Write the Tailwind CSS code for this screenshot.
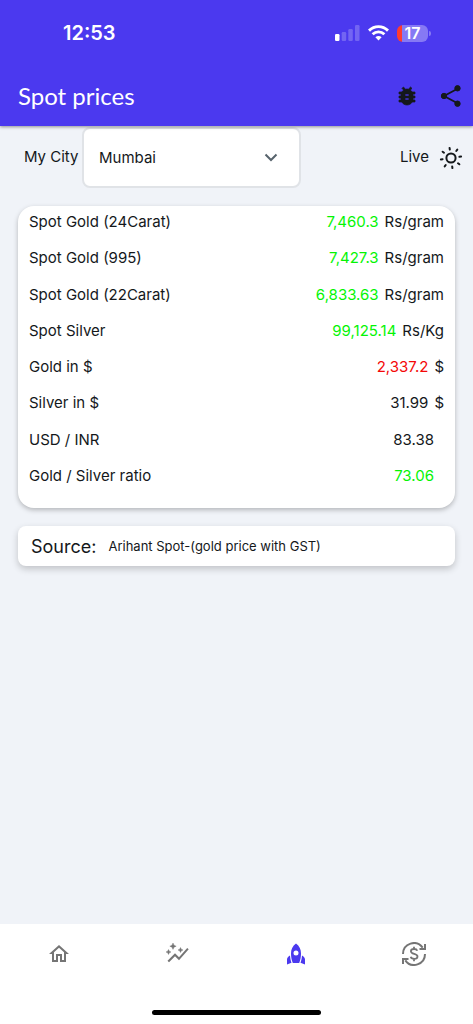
<!DOCTYPE html>
<html lang="en">
<head>
<meta charset="utf-8">
<meta name="viewport" content="width=device-width, initial-scale=1">
<title>Spot prices</title>
<script src="https://cdn.jsdelivr.net/npm/@tailwindcss/browser@4"></script>
</head>
<body class="flex min-h-screen flex-col bg-[#f0f3f8] font-['Inter',sans-serif] text-[15px] text-[#14181b]">
<header class="relative z-10 bg-[#4b39ef] pb-[6px] shadow-[0_1px_3px_rgba(0,0,0,0.4)]">
  <div class="flex h-[66px] items-center justify-between pr-[42px] pl-[63px] text-white">
    <time class="text-xl font-semibold">12:53</time>
    <div class="flex items-center gap-2">
      <svg class="h-4 w-[25px]" viewBox="0 0 25 16" fill="#fff" aria-label="Signal"><rect y="9" width="4.500" height="7" rx="1.2"/><g opacity=".22"><rect x="6.7" y="7" width="4.5" height="9" rx="1.2"/><rect x="13.3" y="4" width="4.5" height="12" rx="1.2"/><rect x="20" width="4.5" height="16" rx="1.2"/></g></svg>
      <svg class="h-4 w-[21px]" viewBox="0 0 21 16" fill="none" stroke="#fff" stroke-width="2.9" aria-label="Wi-Fi"><path d="M1 5.600C6.500.3 14.500.3 20 5.600M4.600 9.300C8 6.100 13 6.100 16.400 9.300"/><path d="M7.400 12.200c1.900-1.700 4.300-1.700 6.200 0l-3.100 3.300z" fill="#fff" stroke="none"/></svg>
      <div class="flex items-center gap-px">
        <div class="flex h-[17px] w-[31px] items-center justify-center rounded-md bg-linear-to-r from-[#ff3b30] from-[17%] to-[#8679f4] to-[17%] text-base font-semibold">17</div>
        <div class="h-[5px] w-[2px] rounded-r-full bg-[#8679f4]"></div>
      </div>
    </div>
  </div>
  <div class="flex h-[54px] items-center justify-between pt-[6px] pr-[10px] pl-[18px]">
    <h1 class="font-['Lato',sans-serif] text-2xl text-white">Spot prices</h1>
    <div class="flex items-center gap-5">
      <button aria-label="Report a bug" class="block"><svg class="size-6" viewBox="0 0 24 24" fill="#14181b" stroke="#14181b" stroke-width=".7"><path d="M20 8h-2.810c-.45-.78-1.070-1.450-1.820-1.960L17 4.410 15.590 3l-2.170 2.170C12.960 5.060 12.490 5 12 5s-.96.060-1.410.170L8.410 3 7 4.410l1.620 1.630C7.880 6.550 7.260 7.220 6.810 8H4v2h2.090c-.05.330-.09.660-.09 1v1H4v2h2v1c0 .34.040.67.090 1H4v2h2.810c1.040 1.790 2.970 3 5.190 3s4.150-1.210 5.190-3H20v-2h-2.090c.05-.33.090-.66.090-1v-1h2v-2h-2v-1c0-.34-.04-.67-.09-1H20V8zm-6 8h-4v-2h4v2zm0-4h-4v-2h4v2z"/></svg></button>
      <button aria-label="Share" class="block"><svg class="size-6" viewBox="0 0 24 24" fill="#14181b" stroke="#14181b"><path d="M19 4.500 5 12l14 7.500" fill="none" stroke-width="1.800"/><circle cx="18.500" cy="4.300" r="2.700"/><circle cx="5" cy="12" r="2.700"/><circle cx="18.500" cy="19.700" r="2.700"/></svg></button>
    </div>
  </div>
</header>
<main class="flex grow flex-col">
  <div class="flex items-center pt-px pr-[10px] pl-6">
    <label for="city" class="w-[58px] whitespace-nowrap">My City</label>
    <div class="relative w-[219px]">
      <select id="city" class="h-[61px] w-full appearance-none rounded-lg border-2 border-[#e0e3e7] bg-white px-[15px] pt-px"><option>Mumbai</option></select>
      <svg class="pointer-events-none absolute top-[18px] right-[18px] size-6" viewBox="0 0 24 24" fill="none" stroke="#57636c" stroke-width="2"><path d="m6.500 9.500 5.500 5.500 5.500-5.500"/></svg>
    </div>
    <div class="ml-auto flex items-center gap-[10px]">
      <span>Live</span>
      <svg class="size-6" viewBox="0 0 24 24" fill="none" stroke="#14181b" stroke-width="2" aria-hidden="true"><circle cx="12" cy="12" r="4.600"/><g transform="rotate(-8 12 12)" stroke-linecap="round"><path d="M12 1.800v1.700M12 20.500v1.700M1.800 12h1.700M20.500 12h1.700M4.600 4.600l1.200 1.200M18.200 18.200l1.200 1.200M4.600 19.400l1.200-1.200M18.200 5.800l1.200-1.200"/></g></svg>
    </div>
  </div>
  <section class="mx-[18px] mt-[18px] rounded-2xl bg-white px-[11px] pb-3 shadow-[0_2px_5px_rgba(0,0,0,0.25)]">
    <table class="h-[290px] w-full leading-8">
      <tbody class="align-top">
        <tr><th scope="row" class="text-left font-normal">Spot Gold (24Carat)</th><td class="text-right"><span class="mr-[6px] text-[#04f404]">7,460.3</span>Rs/gram</td></tr>
        <tr><th scope="row" class="text-left font-normal">Spot Gold (995)</th><td class="text-right"><span class="mr-[6px] text-[#04f404]">7,427.3</span>Rs/gram</td></tr>
        <tr><th scope="row" class="text-left font-normal">Spot Gold (22Carat)</th><td class="text-right"><span class="mr-[6px] text-[#04f404]">6,833.63</span>Rs/gram</td></tr>
        <tr><th scope="row" class="text-left font-normal">Spot Silver</th><td class="text-right"><span class="mr-[6px] text-[#04f404]">99,125.14</span>Rs/Kg</td></tr>
        <tr><th scope="row" class="text-left font-normal">Gold in $</th><td class="text-right"><span class="mr-[6px] text-[#f40808]">2,337.2</span>$</td></tr>
        <tr><th scope="row" class="text-left font-normal">Silver in $</th><td class="text-right"><span class="mr-[6px]">31.99</span>$</td></tr>
        <tr><th scope="row" class="text-left font-normal">USD / INR</th><td class="pr-[10px] text-right">83.38</td></tr>
        <tr><th scope="row" class="text-left font-normal">Gold / Silver ratio</th><td class="pr-[10px] text-right text-[#04f404]">73.06</td></tr>
      </tbody>
    </table>
  </section>
  <section class="mx-[18px] mt-[18px] flex h-10 items-center gap-3 rounded-lg bg-white px-[13px] pt-[2px] shadow-[0_3px_7px_rgba(0,0,0,0.2)]">
    <h2 class="text-lg">Source:</h2>
    <p class="text-[13px]">Arihant Spot-(gold price with GST)</p>
  </section>
</main>
<footer class="flex h-[100px] flex-col items-center justify-between bg-white pb-[9px]">
  <nav class="grid h-[60px] w-full grid-cols-4 place-items-center text-[#757575]">
    <a href="#home" aria-label="Home"><svg class="size-6" viewBox="0 0 24 24" fill="currentColor"><path d="m12 5.690 5 4.500V18h-2v-6H9v6H7v-7.810l5-4.500M12 3 2 12h3v8h6v-6h2v6h6v-8h3L12 3z"/></svg></a>
    <a href="#trends" aria-label="Trends"><svg class="size-6" viewBox="0 0 24 24" fill="currentColor"><path d="M22.200 7 14 16.200l-4-4L2.500 19.700 4 21.200l6-6 4 4L23.700 8.300z" transform="translate(0 -1)"/><path d="m8 1 1 2.200 2.200 1-2.200 1-1 2.200-1-2.200-2.200-1 2.200-1zM15.500 5.500l.8 1.700 1.700.8-1.700.8-.8 1.700-.8-1.700-1.700-.8 1.700-.8zM3.500 7.500l.8 1.700 1.700.8-1.700.8-.8 1.700-.8-1.700-1.700-.8 1.700-.8z" stroke="currentColor" stroke-width=".4"/></svg></a>
    <a href="#spot" aria-label="Spot prices" aria-current="page" class="text-[#4b39ef]"><svg class="size-6" viewBox="0 0 24 24" fill="currentColor"><path fill-rule="evenodd" d="M12 1.500C8.500 4 7 7.500 7 11.500c0 3.500.6 6.500 1.800 9.500h6.400c1.200-3 1.800-6 1.800-9.500 0-4-1.500-7.500-5-10zM12 8.500a2.500 2.500 0 1 1 0 5 2.500 2.500 0 0 1 0-5z"/><path d="M6 13.500c-1.700 1.100-3 2.300-3 4V22.500l4.500-1.800C6.600 18.500 6.200 16 6 13.500zM18 13.500c1.700 1.100 3 2.300 3 4V22.500l-4.500-1.800c.9-2.200 1.300-4.700 1.500-7.200z"/></svg></a>
    <a href="#exchange" aria-label="Currency exchange"><svg class="size-6" viewBox="0 0 24 24" fill="none" stroke="currentColor" stroke-width="2"><path d="M1 12C1 1.500 14.500-3 20.700 5.700M23 2v5h-5.500M23 12C23 22.500 9.500 27 3.300 18.300M1 22v-5h5.500"/><path d="M15.300 8.800c-.4-1.100-1.500-1.800-3.200-1.800-2 0-3.200.9-3.200 2.300 0 3.400 6.600 1.900 6.600 5.200 0 1.500-1.300 2.400-3.300 2.400-1.900 0-3.200-.8-3.500-2.100M12 4.800V7M12 17v2.200" stroke-width="1.800"/></svg></a>
  </nav>
  <div class="h-[5px] w-[169px] rounded-full bg-black"></div>
</footer>
</body>
</html>
